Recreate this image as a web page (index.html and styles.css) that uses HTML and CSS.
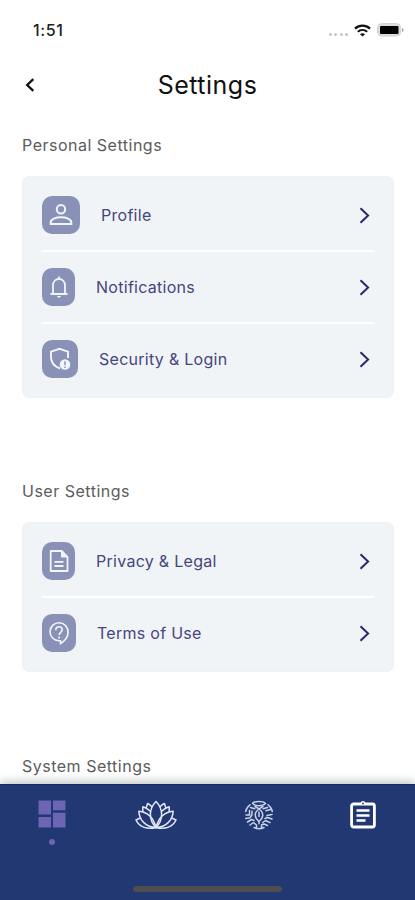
FILE: index.html
```html
<!DOCTYPE html>
<html lang="en">
<head>
<meta charset="utf-8">
<title>Settings</title>
<link rel="stylesheet" href="styles.css">
</head>
<body>
<div class="screen">
  <div class="status">
    <span class="time">1:51</span>
    <div class="indicators">
      <span class="dots"><i></i><i></i><i></i><i></i></span>
      <svg class="wifi" width="17" height="13" viewBox="0 0 17 13" fill="none" stroke="#111" stroke-width="2.2"><path d="M1 4.6C5.2.7 11.8.7 16 4.6"/><path d="M3.8 7.8c2.7-2.4 6.7-2.4 9.4 0"/><path d="M8.5 12.6 6 10.2c1.4-1.2 3.6-1.2 5 0z" fill="#111" stroke="none"/></svg>
      <svg width="27" height="14" viewBox="0 0 27 14"><rect x=".6" y=".6" width="23" height="12.4" rx="4" fill="#dcdcdc" stroke="#d2d2d2"/><rect x="3" y="3" width="18.5" height="8" rx="1" fill="#000"/><path d="M25 5q1.5.5 1.5 2T25 9z" fill="#999"/></svg>
    </div>
  </div>

  <header class="header">
    <svg class="back" width="10" height="14" viewBox="0 0 10 14" fill="none" stroke="#111" stroke-width="2.3"><path d="M8.3 1.2 2.2 7l6.1 5.8"/></svg>
    <h1>Settings</h1>
  </header>

  <main>
    <h2 class="label personal">Personal Settings</h2>
    <section class="card">
      <div class="row">
        <span class="icon w38"><svg width="24" height="24" viewBox="0 0 24 24" fill="none" stroke="#f1f6fc" stroke-width="2"><circle cx="12" cy="6.2" r="4.2"/><path d="M1.7 21v-1.5C1.7 16 7 14.3 12 14.3s10.3 1.7 10.3 5.200V21z"/></svg></span>
        <span class="name">Profile</span>
        <svg class="arrow" viewBox="0 0 11 17"><path d="m1.5 1.3 7.6 7.2-7.6 7.2"/></svg>
      </div>
      <div class="row">
        <span class="icon w33"><svg width="24" height="24" viewBox="0 0 24 24" fill="none" stroke="#f1f6fc" stroke-width="1.8"><path d="M3.500 19h17M6 19V10.500C6 6.500 8.500 4 12 4s6 2.500 6 6.500V19M12 4V1.500"/><path d="M10 21h4q-.4 1.700-2 1.700T10 21z" fill="#f1f6fc" stroke="none"/></svg></span>
        <span class="name">Notifications</span>
        <svg class="arrow" viewBox="0 0 11 17"><path d="m1.5 1.3 7.6 7.2-7.6 7.2"/></svg>
      </div>
      <div class="row">
        <span class="icon w36"><svg width="24" height="24" viewBox="0 0 24 24" fill="none" stroke="#f1f6fc" stroke-width="1.9"><path d="M12 21.500C6.500 19.500 3 15.500 3 10V4.700l8.500-2.900L20 4.700V11"/><circle cx="17" cy="17.500" r="5.300" fill="#f1f6fc" stroke="none"/><path d="M17 14.200v4M17 19.400V21" stroke="#8992b6" stroke-width="1.5"/></svg></span>
        <span class="name">Security &amp; Login</span>
        <svg class="arrow" viewBox="0 0 11 17"><path d="m1.5 1.3 7.6 7.2-7.6 7.2"/></svg>
      </div>
    </section>

    <h2 class="label user">User Settings</h2>
    <section class="card">
      <div class="row">
        <span class="icon w33"><svg width="24" height="24" viewBox="0 0 24 24" fill="none" stroke="#f1f6fc" stroke-width="1.8"><path d="M3.700 2h11L20.500 7.800V22H3.700z" stroke-linejoin="round"/><path d="M14 2v6.500h6.500z" fill="#f1f6fc" stroke="none"/><path d="M7.500 12.800h9M7.500 17h9"/></svg></span>
        <span class="name">Privacy &amp; Legal</span>
        <svg class="arrow" viewBox="0 0 11 17"><path d="m1.5 1.3 7.6 7.2-7.6 7.2"/></svg>
      </div>
      <div class="row">
        <span class="icon w34"><svg width="24" height="24" viewBox="0 0 24 24" fill="none" stroke="#f1f6fc" stroke-width="1.6"><path d="M13.500 19.800v2.700c4.500-2.700 7.500-6.500 7.500-11A9 9 0 1 0 12 19.800z"/><path d="M8.800 9.200C8.800 7 10 5.700 12 5.700s3.200 1.200 3.200 3c0 2.400-3.100 2.800-3.100 5.300M12.100 15.500v1.900"/></svg></span>
        <span class="name">Terms of Use</span>
        <svg class="arrow" viewBox="0 0 11 17"><path d="m1.5 1.3 7.6 7.2-7.6 7.2"/></svg>
      </div>
    </section>

    <h2 class="label system">System Settings</h2>
  </main>

  <nav class="tabs">
    <div class="tab-row">
      <div class="tab active">
        <svg width="28" height="28" viewBox="0 0 28 28" fill="#6b65b3"><path d="M.5.500h12.500v14H.5zM15 .500h12.500v9.800H15zM.5 17H13v10.500H.5zM15 12.800h12.500v14.700H15z"/></svg>
        <span class="dot"></span>
      </div>
      <div class="tab">
        <svg width="42" height="30" viewBox="0 0 42 30" fill="none" stroke="#e3e6f5" stroke-width="1.5" stroke-linejoin="round" stroke-linecap="round"><path d="M21 27.500C13.500 20 13.500 9 21 1.500c7.500 7.500 7.500 18.500 0 26z"/><path d="M21 27.500C18.500 17.500 12 12 3.800 11.200 4.300 20 11 27.500 21 27.500c2.500-10 9-15.500 17.200-16.300C37.700 20 31 27.500 21 27.500z"/><path d="M7.800 11.700V6.800q3.800 1 7.200 4.200M34.200 11.700V6.800q-3.800 1-7.200 4.200M11.200 7.500 12.600 3.500q2.600 1.200 4.200 3.200M30.800 7.500 29.400 3.500q-2.600 1.200-4.200 3.200"/><path d="M4.800 18.300 1 20c3 6.500 10.500 10 20 7.500 9.500 2.500 17-1 20-7.500l-3.800-1.700"/></svg>
      </div>
      <div class="tab">
        <svg width="30" height="30" viewBox="0 0 30 30" fill="none" stroke="#c7d2e8" stroke-width="1.5" stroke-linecap="round" stroke-linejoin="round"><path d="M8.500 3.200C11 1 19 1 21.500 3.200 19 6.500 11 6.500 8.500 3.200zM6 4.800C4 6.500 2 9 1.700 11.500M24 4.800c2 1.700 4 4.200 4.300 6.700M11 6.500l4 2.300 4-2.300M6.500 7.500l4.300 1.300M23.500 7.500l-4.300 1.300"/><path d="M15 21.500c-5-4-5-9 0-12.500 5 3.500 5 8.500 0 12.500z"/><path d="M15 12v4.500M15 21.500v2.300M2 15h3.500V10.500M1.700 18.500 6 17.800l2-3.300V11M3.500 22l4-2.500 2.500 1M28 14.500l-5 1M22 10.800l4.500-1.300M28 19l-4.500-1.500-2.500 1M26 22.700l-4.500-2.200-2.800 2M6 25l3.500-2.500 3 2.500v3M10 27.500c3 1.500 7 1.500 10 0M17.500 28v-3l2.500-1 3.500 1.500"/></svg>
      </div>
      <div class="tab">
        <svg width="26" height="29" viewBox="0 0 26 29"><rect x="1.600" y="4" width="22.800" height="23" rx="2" fill="none" stroke="#fff" stroke-width="2.8"/><path d="M7.500 5V3h3a2.600 2.600 0 0 1 5 0h3v2z" fill="#fff"/><circle cx="13" cy="3.500" r=".9" fill="#223873"/><path d="M6.500 10.500h13M6.500 15.500h13M6.500 20.500h9" stroke="#fff" stroke-width="2.5"/></svg>
      </div>
    </div>
    <div class="home-bar"></div>
  </nav>
</div>
</body>
</html>
```
FILE: styles.css
```css
* {
  box-sizing: border-box;
}

body {
  margin: 0;
  background: #fff;
  font-family: Inter, "Liberation Sans", sans-serif;
}

.screen {
  width: 415px;
  height: 900px;
  display: flex;
  flex-direction: column;
  overflow: hidden;
}

.status {
  height: 60px;
  padding: 0 11px 0 33px;
  display: flex;
  align-items: center;
  justify-content: space-between;
  flex: none;
}

.time {
  font-size: 16px;
  font-weight: 500;
  color: #222;
  letter-spacing: 0.6px;
}

.indicators {
  display: flex;
  align-items: center;
  gap: 6px;
}

.dots {
  display: flex;
  gap: 2.5px;
  padding-top: 8px;
}

.dots i {
  width: 3px;
  height: 3px;
  border-radius: 50%;
  background: #c4c4c4;
}

.header {
  height: 50px;
  padding: 0 25px;
  display: grid;
  grid-template-columns: 60px 1fr 60px;
  align-items: center;
  flex: none;
}

h1 {
  margin: 0;
  text-align: center;
  font-size: 25px;
  line-height: 30px;
  font-weight: 400;
  color: #111;
  letter-spacing: 0.5px;
}

main {
  flex: 1;
  min-height: 0;
  padding: 0 21px 0 22px;
}

.label {
  margin: 0;
  font-size: 16px;
  line-height: 20px;
  font-weight: 400;
  color: #5c5c5c;
  letter-spacing: 0.5px;
}

.personal {
  padding: 25px 0 21px;
}

.user {
  padding: 83px 0 21px;
}

.system {
  padding-top: 84px;
}

.card {
  padding: 3px 20px;
  border-radius: 8px;
  background: #f1f4f6;
  box-shadow: inset 0 0 2px #e8ebee;
}

.row {
  height: 72px;
  display: flex;
  align-items: center;
  gap: 21px;
}

.row + .row {
  box-shadow: 0 -1px #fff, inset 0 1px #fbfcfd;
}

.icon {
  height: 38px;
  border-radius: 10px;
  background: #8992b6;
  display: flex;
  align-items: center;
  justify-content: center;
  flex: none;
}

.w33 {
  width: 33px;
}

.w34 {
  width: 34px;
}

.w36 {
  width: 36px;
}

.w38 {
  width: 38px;
}

.icon svg {
  flex: none;
}

.name {
  flex: 1;
  font-size: 16px;
  color: #45467f;
  letter-spacing: 0.28px;
}

.arrow {
  width: 11px;
  height: 17px;
  margin-right: 4px;
  fill: none;
  stroke: #29286e;
  stroke-width: 2;
}

.tabs {
  height: 116px;
  flex: none;
  display: flex;
  flex-direction: column;
  justify-content: space-between;
  align-items: center;
  padding: 15px 0 8px;
  background: #223873;
  border-top: 1px solid #19285f;
  box-shadow: 0 -2px 9px rgba(80, 100, 95, 0.4);
  position: relative;
}

.tab-row {
  width: 100%;
  display: grid;
  grid-template-columns: repeat(4, 1fr);
}

.tab {
  display: flex;
  flex-direction: column;
  align-items: center;
}

.dot {
  width: 6px;
  height: 6px;
  margin-top: 11px;
  border-radius: 50%;
  background: #6b65b3;
}

.home-bar {
  width: 149px;
  height: 6px;
  border-radius: 3px;
  background: #4e4d50;
}
```
